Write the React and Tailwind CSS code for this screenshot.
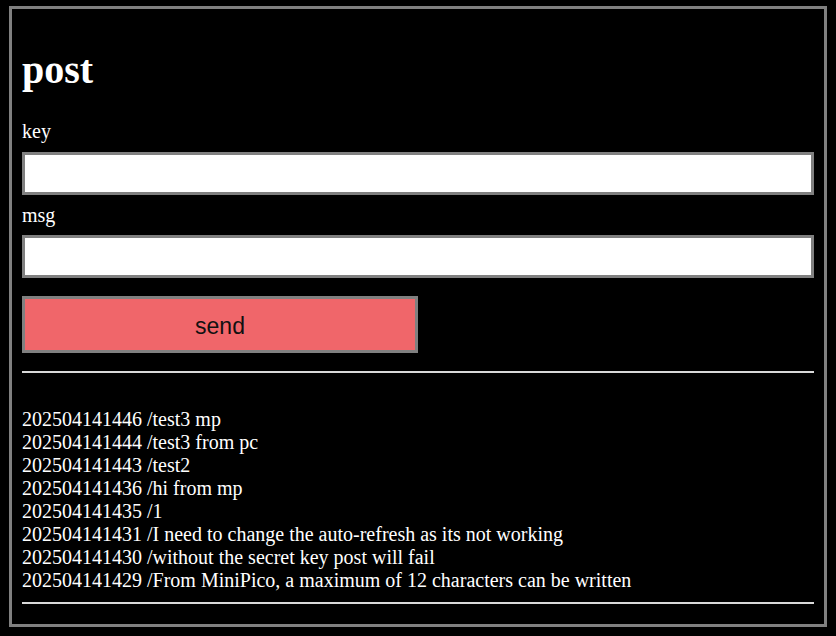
import { useState } from 'react';

const messages = [
  '202504141446 /test3 mp',
  '202504141444 /test3 from pc',
  '202504141443 /test2',
  '202504141436 /hi from mp',
  '202504141435 /1',
  '202504141431 /I need to change the auto-refresh as its not working',
  '202504141430 /without the secret key post will fail',
  '202504141429 /From MiniPico, a maximum of 12 characters can be written',
];

export default function App() {
  const [key, setKey] = useState('');
  const [msg, setMsg] = useState('');

  const handleSubmit = (e) => {
    e.preventDefault();
  };

  return (
    <div className="min-h-[636px] bg-black pt-[6px] px-[9px] pb-[9px] text-white font-['Liberation_Serif',serif]">
      <div className="border-[3px] border-[#808080] px-[10px] pb-[20px]">
        <h1 className="mt-[38px] text-[40px] leading-[46px] font-bold">post</h1>
        <form onSubmit={handleSubmit}>
          <label className="block mt-[27px] text-[20px] leading-[23px]">key</label>
          <input
            type="text"
            className="block w-full mt-[9px] h-[43px] bg-white border-[3px] border-[#808080] text-black outline-none"
            value={key}
            onChange={(e) => setKey(e.target.value)}
          />
          <label className="block mt-[9px] text-[20px] leading-[23px]">msg</label>
          <input
            type="text"
            className="block w-full mt-[8px] h-[43px] bg-white border-[3px] border-[#808080] text-black outline-none"
            value={msg}
            onChange={(e) => setMsg(e.target.value)}
          />
          <button
            type="submit"
            className="block w-1/2 mt-[18px] h-[57px] pt-[3px] bg-[#f0666a] border-[3px] border-[#808080] text-[#111] text-[23px] font-['Liberation_Sans',sans-serif]"
          >
            send
          </button>
        </form>
        <div className="mt-[18px] h-[2px] bg-[#d9d9d9]" />
        <div className="mt-[35px] text-[20px] leading-[23px]">
          {messages.map((m) => (
            <div key={m}>{m}</div>
          ))}
        </div>
        <div className="mt-[10px] h-[2px] bg-[#d9d9d9]" />
      </div>
    </div>
  );
}
